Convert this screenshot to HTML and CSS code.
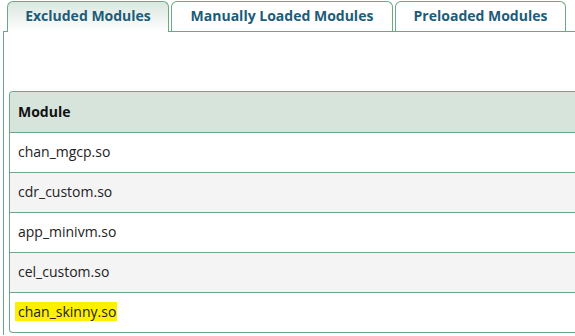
FILE: index.html
```html
<!DOCTYPE html>
<html lang="en">
<head>
    <meta charset="UTF-8">
    <meta name="viewport" content="width=device-width, initial-scale=1.0">
    <title>Modules</title>
    <link rel="stylesheet" href="styles.css">
</head>
<body>
<div id="modulos">
    <div class="abas">
        <div class="aba ativa">Excluded Modules</div>
        <div class="aba">Manually Loaded Modules</div>
        <div class="aba">Preloaded Modules</div>
    </div>
    <div class="painel">
        <div class="tabela">
            <div class="cabecalho">Module</div>
            <div class="linha">chan_mgcp.so</div>
            <div class="linha par">cdr_custom.so</div>
            <div class="linha">app_minivm.so</div>
            <div class="linha par">cel_custom.so</div>
            <div class="linha"><span class="marca">chan_skinny.so</span></div>
        </div>
    </div>
</div>
</body>
</html>
```

FILE: styles.css
```css
body {
    margin: 0;
    font-family: 'Open Sans', sans-serif;
    font-size: 14px;
    color: #222;
}

#modulos {
    margin: 1px 0 0 3px;
}

.abas {
    display: flex;
    align-items: flex-start;
    gap: 2px;
    padding-left: 4px;
    margin-bottom: -1px;
}

.aba {
    box-sizing: border-box;
    height: 30px;
    padding-bottom: 2px;
    display: flex;
    align-items: center;
    justify-content: center;
    border: 1px solid #6aa886;
    border-bottom: none;
    border-radius: 6px 6px 0 0;
    background-color: white;
    color: #1c5c78;
    font-weight: bold;
    position: relative;
    z-index: 1;
}

.aba:nth-child(1) {
    width: 162px;
}

.aba:nth-child(2) {
    width: 222px;
}

.aba:nth-child(3) {
    width: 171px;
}

.ativa {
    height: 31px;
    padding-bottom: 3px;
    background: linear-gradient(#dbe7e0, #ffffff);
}

.painel {
    border-top: 1px solid #6aa886;
    border-left: 1px solid #6aa886;
    padding: 59px 0 0 5px;
    height: 244px;
}

.tabela {
    border: 1px solid #6aa886;
    border-right: none;
    border-radius: 4px 0 0 4px;
    overflow: hidden;
}

.cabecalho, .linha {
    box-sizing: border-box;
    display: flex;
    align-items: center;
    padding: 0 8px 2px 8px;
}

.cabecalho {
    height: 40px;
    background-color: #d6e4dc;
    font-weight: bold;
    color: #111;
}

.linha {
    height: 40px;
    border-top: 1px solid #6aa886;
}

.par {
    background-color: #f4f4f4;
}

.marca {
    background-color: #fef000;
    padding: 0 1px 0 3px;
    margin-left: -3px;
}
```
